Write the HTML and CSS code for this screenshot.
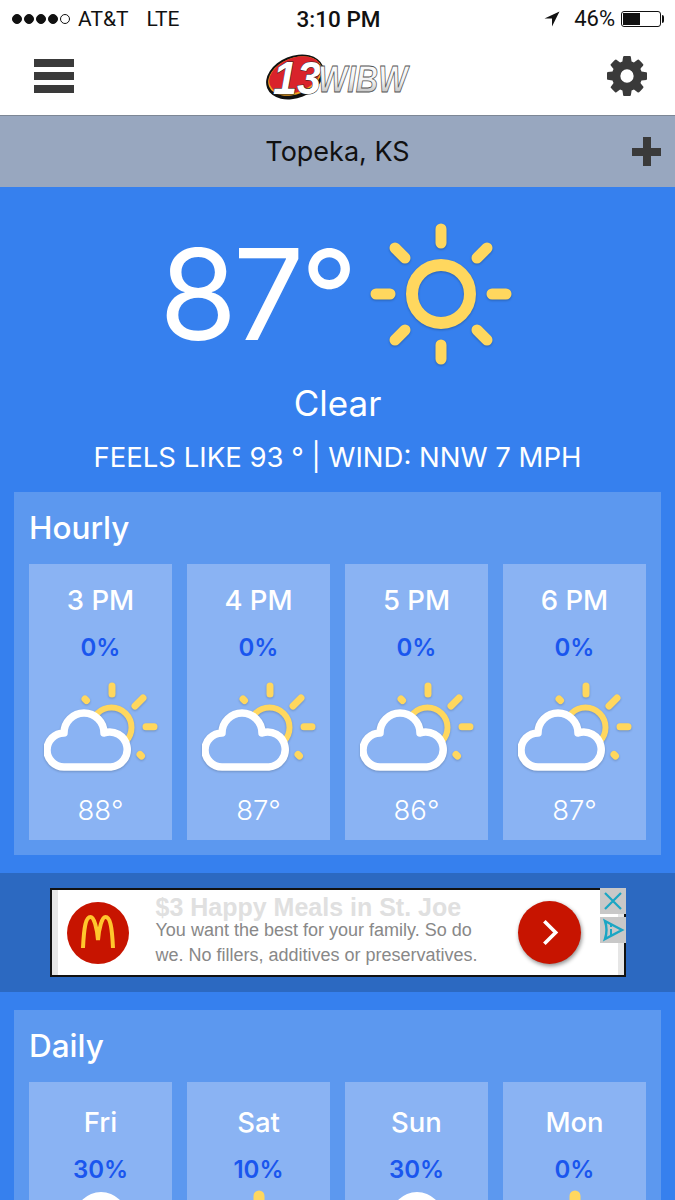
FILE: index.html
```html
<!DOCTYPE html>
<html lang="en">
<head>
  <meta charset="UTF-8" />
  <meta name="viewport" content="width=device-width, initial-scale=1" />
  <title>WIBW Weather</title>
  <link rel="stylesheet" href="styles.css">
</head>
<body>

  <svg class="icon-defs" aria-hidden="true">
    <defs>
      <linearGradient id="chrome" x1="0" y1="0" x2="0" y2="1">
        <stop offset="0" stop-color="#ffffff" />
        <stop offset="0.55" stop-color="#f2f2f2" />
        <stop offset="1" stop-color="#a9a9a9" />
      </linearGradient>
    </defs>
    <symbol id="partly" viewBox="0 0 114 89">
      <g fill="none" stroke="#ffd75e" stroke-width="7" stroke-linecap="round">
        <circle cx="67.5" cy="45.5" r="20" stroke-width="6" />
        <path d="M68 4v8M91 24l8-8M102 44.700h8M96 72.500l1.500 1.500M41 17l1.500 1.500" />
      </g>
      <path d="M20 85A17 17 0 0 1 20 51A20 20 0 0 1 60 51A17.500 17.500 0 1 1 67 85Z" fill="#8ab3f3" stroke="#fff" stroke-width="7.500" stroke-linejoin="round" />
    </symbol>
    <symbol id="sun" viewBox="0 0 142 142">
      <circle cx="71" cy="71" r="29" fill="none" stroke="#ffd75e" stroke-width="12" />
      <path d="M71 6v14M71 122v14M6 71h14M122 71h14M25 25l10 10M107 107l10 10M25 117l10-10M107 35l10-10" fill="none" stroke="#ffd75e" stroke-width="11" stroke-linecap="round" />
    </symbol>
  </svg>

  <div class="status-bar">
    <div class="status-left">
      <span class="signal"><i></i><i></i><i></i><i></i><i class="off"></i></span>
      <span>AT&amp;T</span>
      <span class="carrier-type">LTE</span>
    </div>
    <div class="status-time">3:10 PM</div>
    <div class="status-right">
      <svg class="arrow" viewBox="0 0 16 16"><path d="M15.500 .5L.5 7.500h7.500v8z" fill="#111" /></svg>
      <span>46%</span>
      <span class="battery"><b></b></span>
    </div>
  </div>

  <header class="nav">
    <div class="hamburger"><i></i><i></i><i></i></div>
    <svg class="logo" viewBox="0 -5 150 56">
      <ellipse cx="29" cy="24" rx="30" ry="21" transform="rotate(-22 29 24)" fill="#111" />
      <ellipse cx="29" cy="23" rx="28" ry="18" transform="rotate(-22 29 23)" fill="#f0a020" />
      <ellipse cx="29" cy="22" rx="27" ry="17" transform="rotate(-22 29 22)" fill="#d9232b" />
      <text class="logo-num" x="7" y="41" textLength="48" lengthAdjust="spacingAndGlyphs">13</text>
      <text class="logo-name" transform="translate(52 39) scale(1 1.2)">WIBW</text>
    </svg>
    <svg class="gear" viewBox="0 0 1536 1536"><path fill="#3a3a3a" d="M1024 768q0-106-75-181t-181-75-181 75-75 181 75 181 181 75 181-75 75-181zm512-109v222q0 12-8 23t-20 13l-185 28q-19 54-39 91 35 50 107 138 10 12 10 25t-9 23q-27 37-99 108t-94 71q-12 0-26-9l-138-108q-44 23-91 38-16 136-29 186-7 28-36 28h-222q-14 0-24.500-8.500t-11.500-21.500l-28-184q-49-16-90-37l-141 107q-10 9-25 9-14 0-25-11-126-114-165-168-7-10-7-23 0-12 8-23 15-21 51-66.500t54-70.500q-27-50-41-99l-183-27q-13-2-21-12.500t-8-23.500v-222q0-12 8-23t19-13l186-28q14-46 39-92-40-57-107-138-10-12-10-24 0-10 9-23 26-36 98.500-107.500t94.500-71.500q13 0 26 10l138 107q44-23 91-38 16-136 29-186 7-28 36-28h222q14 0 24.500 8.500t11.500 21.500l28 184q49 16 90 37l142-107q9-9 24-9 13 0 25 10 129 119 165 170 7 8 7 22 0 12-8 23-15 21-51 66.500t-54 70.500q26 50 41 98l183 28q13 2 21 12.500t8 23.500z" /></svg>
  </header>

  <div class="location">
    <span class="location-name">Topeka, KS</span>
    <span class="plus"></span>
  </div>

  <main class="main">
    <section class="hero">
      <div class="hero-row">
        <span class="hero-temp">87°</span>
        <svg class="hero-sun"><use href="#sun" /></svg>
      </div>
      <div class="hero-cond">Clear</div>
      <div class="hero-feels">FEELS LIKE 93 ° | WIND: NNW 7 MPH</div>
    </section>

    <section class="panel">
      <h2>Hourly</h2>
      <div class="cards">
        <div class="card">
          <div class="card-label">3 PM</div>
          <div class="card-pct">0%</div>
          <svg class="card-icon"><use href="#partly" /></svg>
          <div class="card-temp">88°</div>
        </div>
        <div class="card">
          <div class="card-label">4 PM</div>
          <div class="card-pct">0%</div>
          <svg class="card-icon"><use href="#partly" /></svg>
          <div class="card-temp">87°</div>
        </div>
        <div class="card">
          <div class="card-label">5 PM</div>
          <div class="card-pct">0%</div>
          <svg class="card-icon"><use href="#partly" /></svg>
          <div class="card-temp">86°</div>
        </div>
        <div class="card">
          <div class="card-label">6 PM</div>
          <div class="card-pct">0%</div>
          <svg class="card-icon"><use href="#partly" /></svg>
          <div class="card-temp">87°</div>
        </div>
      </div>
    </section>

    <section class="ad-strip">
      <div class="ad">
        <div class="ad-mark">
          <svg viewBox="0 0 62 62"><path d="M16 46C17 24 19 15 23.500 15C27 15 30 26 31 38C32 26 35 15 38.500 15C43 15 45 24 46 46" fill="none" stroke="#ffc72c" stroke-width="4" /></svg>
        </div>
        <div class="ad-copy">
          <div class="ad-title">$3 Happy Meals in St. Joe</div>
          <div class="ad-text">You want the best for your family. So do</div>
          <div class="ad-text">we. No fillers, additives or preservatives.</div>
        </div>
        <div class="ad-go">
          <svg viewBox="0 0 24 32"><path d="M7 5l11 11L7 27" fill="none" stroke="#fff" stroke-width="3.500" /></svg>
        </div>
        <div class="ad-controls">
          <div class="ad-btn"><svg viewBox="0 0 26 26"><path d="M5 5l16 16M21 5L5 21" stroke="#1aa6c4" stroke-width="2.200" /></svg></div>
          <div class="ad-btn"><svg viewBox="0 0 26 26"><path d="M5 4l17 9-17 9c2-6 2-12 0-18z" fill="none" stroke="#1aa6c4" stroke-width="2.400" /><path d="M11 12v6M11 8v2" stroke="#1aa6c4" stroke-width="2" /></svg></div>
        </div>
      </div>
    </section>

    <section class="panel">
      <h2>Daily</h2>
      <div class="cards">
        <div class="card card-day">
          <div class="card-label">Fri</div>
          <div class="card-pct">30%</div>
          <div class="cloud-top"></div>
        </div>
        <div class="card card-day">
          <div class="card-label">Sat</div>
          <div class="card-pct">10%</div>
          <svg class="day-sun"><use href="#sun" /></svg>
        </div>
        <div class="card card-day">
          <div class="card-label">Sun</div>
          <div class="card-pct">30%</div>
          <div class="cloud-top"></div>
        </div>
        <div class="card card-day">
          <div class="card-label">Mon</div>
          <div class="card-pct">0%</div>
          <svg class="day-sun"><use href="#sun" /></svg>
        </div>
      </div>
    </section>
  </main>

</body>
</html>
```

FILE: styles.css
```css
html, body {
  margin: 0;
  padding: 0;
  height: 1200px;
  overflow: hidden;
}
body {
  font-family: Inter, "Noto Sans", sans-serif;
  background-color: #3680ee;
  color: #fff;
}
.icon-defs {
  position: absolute;
  width: 0;
  height: 0;
}

/* status bar */
.status-bar {
  display: grid;
  grid-template-columns: 1fr auto 1fr;
  align-items: center;
  height: 37px;
  padding: 0 10px 0 12px;
  background-color: #fff;
  color: #111;
  font-family: Roboto, sans-serif;
  font-size: 21px;
}
.status-left {
  display: flex;
  align-items: center;
  gap: 8px;
}
.carrier-type {
  margin-left: 10px;
}
.signal {
  display: flex;
  gap: 2px;
}
.signal i {
  width: 10px;
  height: 10px;
  border-radius: 50%;
  background-color: #111;
  border: 1px solid #111;
  box-sizing: border-box;
}
.signal i.off {
  background-color: #fff;
}
.status-time {
  font-weight: 500;
  font-size: 22.5px;
}
.status-right {
  display: flex;
  align-items: center;
  justify-content: flex-end;
  gap: 6px;
  font-size: 22px;
}
.arrow {
  width: 16px;
  height: 16px;
  margin-right: 8px;
}
.battery {
  position: relative;
  display: block;
  width: 40px;
  height: 16px;
  margin-right: 4px;
  border: 1px solid #111;
  border-radius: 3px;
  box-sizing: border-box;
  padding: 1px;
}
.battery b {
  display: block;
  width: 46%;
  height: 100%;
  background-color: #111;
}
.battery::after {
  content: "";
  position: absolute;
  right: -4px;
  top: 3px;
  width: 2px;
  height: 8px;
  background-color: #111;
  border-radius: 0 2px 2px 0;
}

/* nav */
.nav {
  display: flex;
  align-items: center;
  justify-content: space-between;
  height: 78px;
  padding: 0 28px 0 34px;
  background-color: #fff;
}
.hamburger {
  display: flex;
  flex-direction: column;
  gap: 5px;
  width: 40px;
}
.hamburger i {
  height: 8px;
  background-color: #3a3a3a;
}
.logo {
  width: 150px;
  height: 56px;
}
.logo-num {
  font-family: "Liberation Sans", sans-serif;
  font-weight: bold;
  font-style: italic;
  font-size: 46px;
  fill: #fff;
  stroke: #222;
  stroke-width: 1;
  paint-order: stroke;
}
.logo-name {
  font-family: "Liberation Sans", sans-serif;
  font-weight: bold;
  font-style: italic;
  font-size: 31px;
  fill: url(#chrome);
  stroke: #555;
  stroke-width: 0.7;
}
.gear {
  width: 40px;
  height: 40px;
}

/* location */
.location {
  display: flex;
  align-items: center;
  justify-content: center;
  position: relative;
  height: 72px;
  box-sizing: border-box;
  border-top: 1px solid #7d8795;
  background-color: #98a7bf;
  color: #111;
  font-size: 27px;
}
.plus {
  position: absolute;
  right: 14px;
  top: 21px;
  width: 29px;
  height: 29px;
  background:
    linear-gradient(#3a3a3a, #3a3a3a) center / 100% 8px no-repeat,
    linear-gradient(#3a3a3a, #3a3a3a) center / 8px 100% no-repeat;
}

/* hero */
.hero {
  padding-top: 36px;
  text-align: center;
}
.hero-row {
  display: flex;
  align-items: center;
  justify-content: center;
  height: 142px;
  gap: 16px;
  padding-right: 4px;
}
.hero-temp {
  font-size: 126px;
  font-weight: 400;
  letter-spacing: -4px;
  line-height: 142px;
}
.hero-sun {
  width: 142px;
  height: 142px;
  filter: drop-shadow(0 1px 1px rgba(0, 0, 0, 0.25));
}
.hero-cond {
  margin-top: 18px;
  font-size: 35px;
  line-height: 40px;
}
.hero-feels {
  margin-top: 17px;
  font-size: 27.5px;
  line-height: 34px;
}

/* panels */
.panel {
  margin: 18px 14px 0;
  padding: 16px 15px 15px;
  background-color: #5c98ef;
}
.panel h2 {
  margin: 0 0 16px;
  font-size: 31.5px;
  font-weight: 500;
  line-height: 40px;
}
.cards {
  display: grid;
  grid-template-columns: repeat(4, 1fr);
  gap: 15px;
}
.card {
  height: 276px;
  padding-top: 18px;
  box-sizing: border-box;
  background-color: #8ab3f3;
  text-align: center;
}
.card-day {
  padding-top: 22px;
}
.card-label {
  font-size: 27.5px;
  font-weight: 500;
  line-height: 36px;
}
.card-pct {
  margin-top: 15px;
  font-size: 24px;
  font-weight: 600;
  line-height: 30px;
  color: #1a56ee;
}
.card-icon {
  display: block;
  width: 114px;
  height: 89px;
  margin: 19px auto 0;
  filter: drop-shadow(0 1px 1px rgba(0, 0, 0, 0.2));
}
.card-temp {
  margin-top: 22px;
  font-size: 27.5px;
  font-weight: 300;
  line-height: 34px;
}
.cloud-top {
  width: 52px;
  height: 52px;
  margin: 7px auto 0;
  border-radius: 50%;
  background-color: #fff;
}
.day-sun {
  display: block;
  width: 142px;
  height: 142px;
  margin: 5px auto 0;
}

/* ad */
.ad-strip {
  display: flex;
  justify-content: center;
  margin-top: 18px;
  padding: 15px 0;
  background-color: #2c69c1;
}
.ad {
  display: flex;
  align-items: center;
  position: relative;
  width: 576px;
  height: 89px;
  box-sizing: border-box;
  border: 2px solid #111;
  background-color: #fff;
  font-family: "Liberation Sans", sans-serif;
}
.ad::before, .ad::after {
  content: "";
  position: absolute;
  top: 0;
  bottom: 0;
  width: 6px;
  background-color: #e6e6e6;
}
.ad::before {
  left: 0;
}
.ad::after {
  right: 0;
}
.ad-mark {
  flex: none;
  width: 62px;
  height: 62px;
  margin-left: 15px;
  border-radius: 50%;
  background-color: #c71400;
}
.ad-mark svg, .ad-go svg {
  display: block;
  width: 100%;
  height: 100%;
}
.ad-copy {
  flex: 1;
  margin-left: 27px;
  margin-top: -1px;
  color: #888;
  white-space: nowrap;
}
.ad-title {
  font-size: 25px;
  font-weight: bold;
  line-height: 21px;
  color: #e0e0e0;
}
.ad-text {
  font-size: 18px;
  line-height: 25px;
}
.ad-go {
  flex: none;
  box-sizing: border-box;
  width: 63px;
  height: 63px;
  margin-right: 43px;
  padding: 15px 19px;
  border-radius: 50%;
  background-color: #c71400;
  box-shadow: 1px 2px 4px rgba(0, 0, 0, 0.45);
}
.ad-controls {
  position: absolute;
  z-index: 1;
  top: -2px;
  right: -2px;
  display: flex;
  flex-direction: column;
  gap: 3px;
}
.ad-btn {
  width: 26px;
  height: 26px;
  background-color: #c8c8c8;
}
.ad-btn svg {
  display: block;
}
```
